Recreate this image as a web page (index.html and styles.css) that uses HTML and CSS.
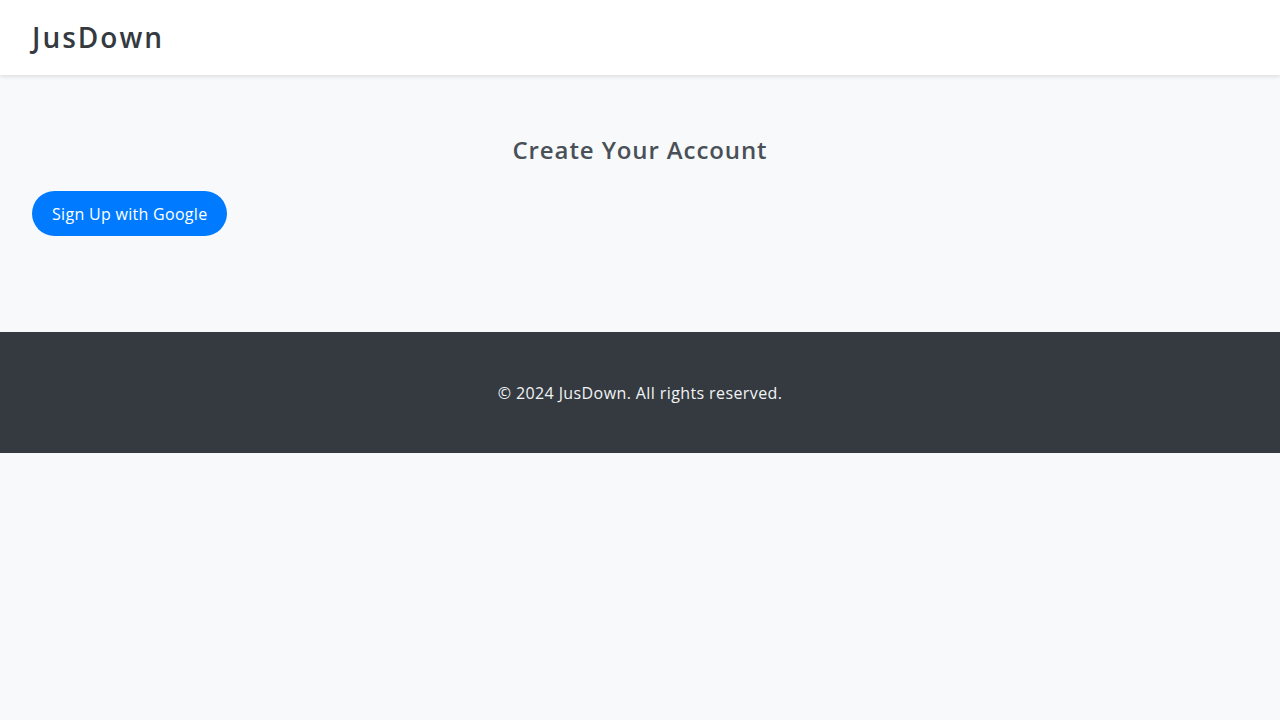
FILE: index.html
```html
<!DOCTYPE html>
<html lang="en">
<head>
<meta charset="utf-8">
<title>JusDown - Sign Up</title>
<link rel="stylesheet" href="styles.css">
</head>
<body>
<header class="site-header">
  <div class="brand">JusDown</div>
</header>
<main class="main">
  <h2 class="title">Create Your Account</h2>
  <button class="google-btn" type="button">Sign Up with Google</button>
</main>
<footer class="site-footer">
  <p class="copy">© 2024 JusDown. All rights reserved.</p>
</footer>
</body>
</html>
```
FILE: styles.css
```css
html, body {
  margin: 0;
  padding: 0;
}
body {
  background: #f8f9fa;
  font-family: "Open Sans", "Noto Sans", sans-serif;
  color: #343a40;
}
.site-header {
  height: 75px;
  background: #ffffff;
  box-shadow: 0 2px 4px rgba(0, 0, 0, 0.1);
  display: flex;
  align-items: center;
  padding: 0 32px 2px;
  box-sizing: border-box;
  position: relative;
}
.brand {
  font-size: 28px;
  font-weight: 600;
  letter-spacing: 2px;
  color: #343a40;
  line-height: 1;
}
.main {
  padding: 57px 32px 96px;
}
.title {
  margin: 0 0 23px;
  text-align: center;
  font-size: 24px;
  line-height: 36px;
  font-weight: 600;
  letter-spacing: 0.9px;
  color: #495057;
}
.google-btn {
  display: block;
  height: 45px;
  padding: 0 20px;
  border: none;
  border-radius: 25px;
  background: #007bff;
  color: #ffffff;
  font-family: inherit;
  font-size: 16px;
  letter-spacing: 0.3px;
  cursor: pointer;
}
.site-footer {
  background: #343a40;
  height: 121px;
  display: flex;
  align-items: center;
  justify-content: center;
}
.copy {
  margin: 0;
  color: #f1f3f5;
  font-size: 16px;
  line-height: 24px;
  letter-spacing: 0.4px;
}
```
